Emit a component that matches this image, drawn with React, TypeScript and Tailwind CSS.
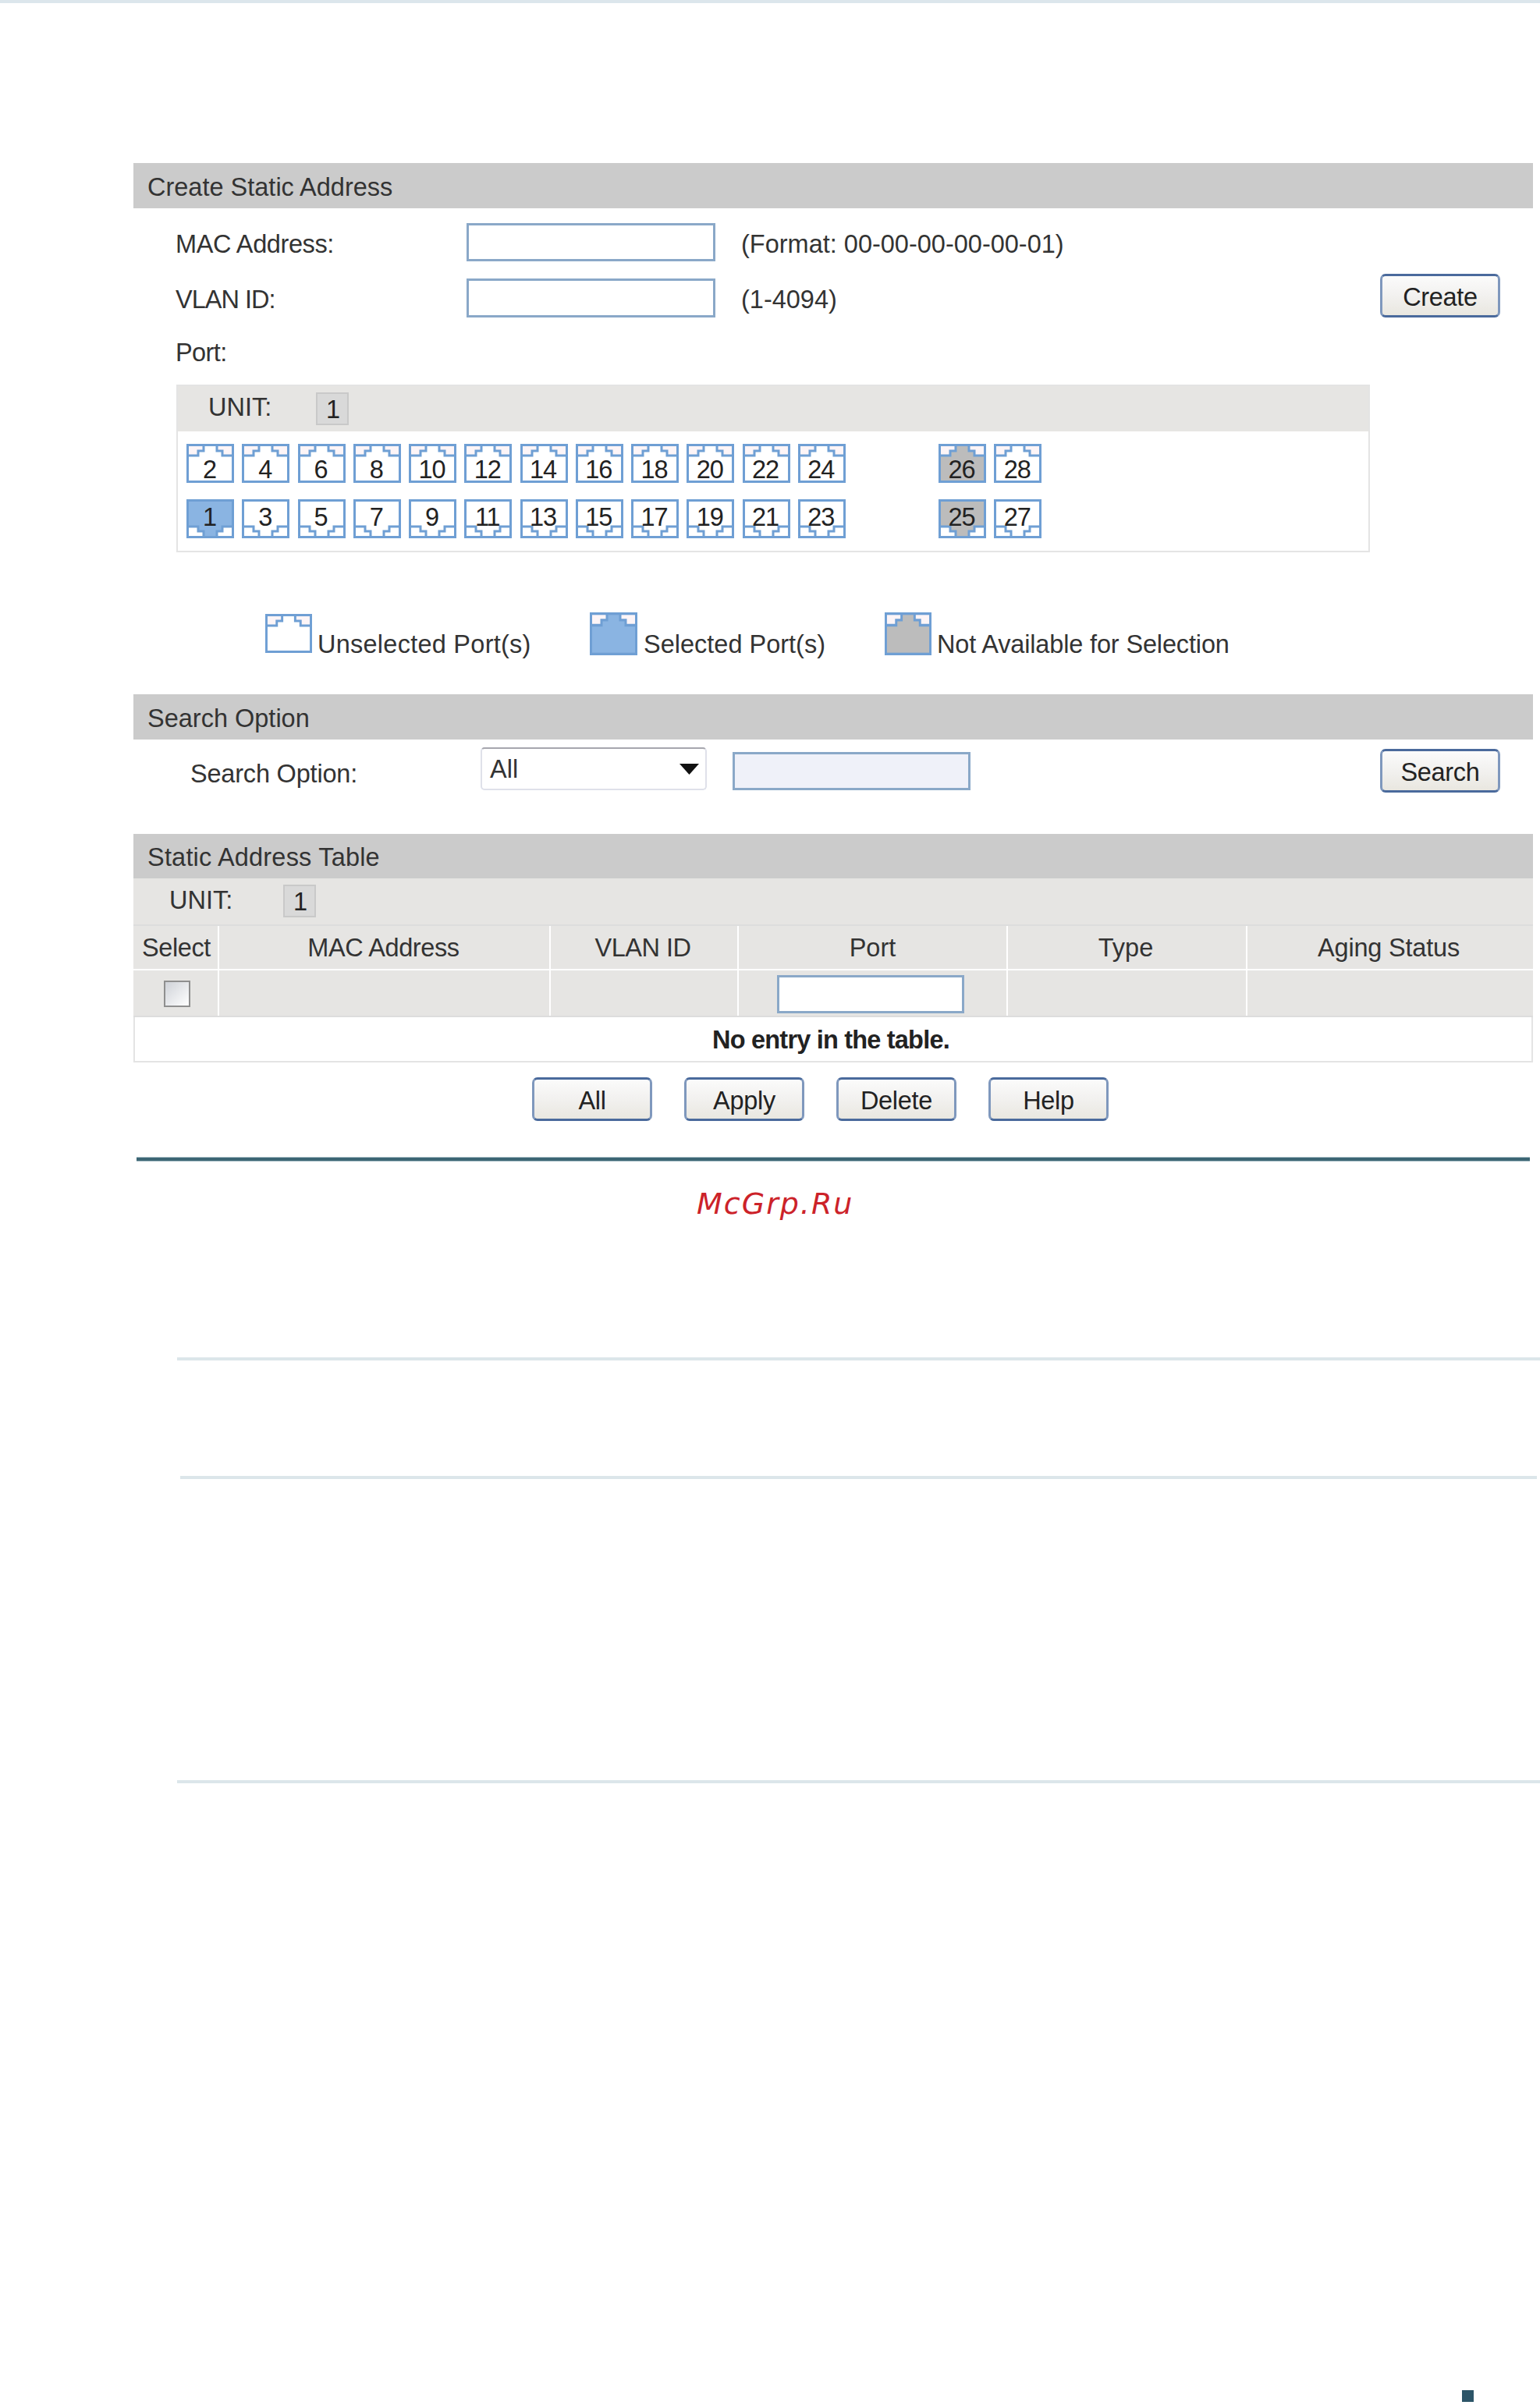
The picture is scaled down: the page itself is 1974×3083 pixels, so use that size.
/**
 * Static address config page: create form, search bar, address table.
 * Port glyphs are drawn inline, everything else is flow layout.
 */

const EVEN_PORTS = [2, 4, 6, 8, 10, 12, 14, 16, 18, 20, 22, 24];
const ODD_PORTS = [1, 3, 5, 7, 9, 11, 13, 15, 17, 19, 21, 23];

function PortGlyph({
  fill = "#ffffff",
  flip = false,
  corner = "#fdf5f7",
  className,
}: {
  fill?: string;
  flip?: boolean;
  corner?: string;
  className?: string;
}) {
  return (
    <svg viewBox="0 0 61 50" preserveAspectRatio="none" className={className}>
      <g transform={flip ? "matrix(1 0 0 -1 0 50)" : undefined}>
        <rect x="1" y="1" width="59" height="48" fill={fill} />
        <path d="M2 15H15V9H22V2H2Z" fill={corner} />
        <path d="M59 15H46V9H39V2H59Z" fill={corner} />
        <path
          d="M2 15H15V9H22V2M59 15H46V9H39V2"
          fill="none"
          stroke="#6f9fd4"
          strokeWidth="3"
        />
        <rect x="1.5" y="1.5" width="58" height="47" fill="none" stroke="#6f9fd4" strokeWidth="3" />
      </g>
    </svg>
  );
}

function Port({ n, flip, fill, corner }: { n: number; flip?: boolean; fill?: string; corner?: string }) {
  return (
    <div className="relative h-[50px] w-[61px] shrink-0">
      <PortGlyph flip={flip} fill={fill} corner={corner} className="h-full w-full" />
      <span
        className={`absolute inset-0 flex items-center justify-center pr-[2px] text-[32.5px] leading-none tracking-[-1px] text-[#222] ${
          flip ? "pb-[3px]" : "pt-[17px]"
        }`}
      >
        {n}
      </span>
    </div>
  );
}

function PortRow({ ports, flip, extra, className }: { ports: number[]; flip?: boolean; extra: number[]; className?: string }) {
  return (
    <div className={`flex ${className ?? ""}`}>
      <div className="flex w-[964px] gap-[10.25px]">
        {ports.map((p) => (
          <Port key={p} n={p} flip={flip} fill={p === 1 ? "#8ab4e2" : undefined} corner={flip ? "#ffffff" : undefined} />
        ))}
      </div>
      <div className="flex gap-[10.25px]">
        <Port n={extra[0]} flip={flip} fill="#bcbcbc" corner={flip ? "#ffffff" : undefined} />
        <Port n={extra[1]} flip={flip} corner={flip ? "#ffffff" : undefined} />
      </div>
    </div>
  );
}

function Btn({ children, className }: { children: React.ReactNode; className?: string }) {
  return (
    <button
      className={`flex h-[56px] w-[154px] items-center justify-center rounded-[7px] border-[3px] border-x-[#7f98bd] border-y-[#4a6a9c] bg-gradient-to-b from-[#fbfbfb] via-[#f2f1ef] to-[#e9e7e0] pt-[5px] text-[32.5px] leading-none tracking-[-0.3px] text-[#222] ${className ?? ""}`}
    >
      {children}
    </button>
  );
}

function SectionHead({ children }: { children: React.ReactNode }) {
  return (
    <div className="flex h-[58px] items-center bg-[#cbcbcb] pl-[18px] pt-[3px] text-[#333]">{children}</div>
  );
}

function UnitBox() {
  return (
    <div className="flex h-[42px] w-[42px] items-center justify-center border-2 border-[#c9c9c9] bg-[#d9d9d9] pl-[2px] pt-[2px] leading-none text-[#222]">
      1
    </div>
  );
}

function TextBox({ className }: { className?: string }) {
  return <div className={`border-[3px] border-[#8aa8c8] bg-white ${className ?? ""}`} />;
}

export default function App() {
  return (
    <div className="h-[3083px] w-[1974px] overflow-hidden bg-white font-['Liberation_Sans',Arial,sans-serif] text-[32.5px] leading-[40px] text-[#333]">
      <div className="h-[4px] bg-[#dce6ec]" />

      <main className="ml-[171px] mt-[205px] w-[1794px]">
        {/* create form */}
        <SectionHead>Create Static Address</SectionHead>
        <div className="mt-[19px] flex h-[49px] items-center pl-[54px]">
          <span className="w-[373px] pt-[4px] tracking-[-0.4px]">MAC Address:</span>
          <TextBox className="h-[49px] w-[319px]" />
          <span className="ml-[33px] pt-[4px]">(Format: 00-00-00-00-00-01)</span>
        </div>
        <div className="mt-[22px] flex h-[50px] items-center pl-[54px]">
          <span className="w-[373px] pt-[4px] tracking-[-1px]">VLAN ID:</span>
          <TextBox className="h-[50px] w-[319px]" />
          <span className="ml-[33px] pt-[4px]">(1-4094)</span>
          <Btn className="ml-auto mr-[42px] h-[55px] self-end">Create</Btn>
        </div>
        <div className="ml-[54px] mt-[25px] tracking-[-0.6px]">Port:</div>

        <div className="ml-[55px] mt-[21px] h-[215px] w-[1530px] border-2 border-[#e4e4e4]">
          <div className="flex h-[58px] items-center bg-[#e6e5e3] pl-[39px]">
            <span className="w-[138px] pb-[4px]">UNIT:</span>
            <UnitBox />
          </div>
          <PortRow ports={EVEN_PORTS} extra={[26, 28]} className="ml-[11px] mt-[16px]" />
          <PortRow ports={ODD_PORTS} flip extra={[25, 27]} className="ml-[11px] mt-[21px]" />
        </div>

        {/* legend */}
        <div className="ml-[169px] mt-[77px] flex h-[59px] items-end">
          <div className="flex w-[416px] items-end gap-[7px]">
            <PortGlyph className="mb-[7px] h-[50px] w-[60px] shrink-0" />
            <span className="leading-[36px] tracking-[0.25px]">Unselected Port(s)</span>
          </div>
          <div className="flex w-[378px] items-end gap-[8px]">
            <PortGlyph fill="#8ab4e2" className="mb-[4px] h-[55px] w-[61px] shrink-0" />
            <span className="leading-[36px]">Selected Port(s)</span>
          </div>
          <div className="flex items-end gap-[7px]">
            <PortGlyph fill="#bcbcbc" className="mb-[4px] h-[55px] w-[60px] shrink-0" />
            <span className="leading-[36px] tracking-[-0.15px]">Not Available for Selection</span>
          </div>
        </div>

        {/* search */}
        <div className="mt-[46px]">
          <SectionHead>Search Option</SectionHead>
        </div>
        <div className="flex h-[68px] items-start pt-[10px]">
          <span className="ml-[73px] mt-[14px] w-[372px] tracking-[-0.2px]">Search Option:</span>
          <div className="flex h-[55px] w-[290px] items-center justify-between rounded-[5px] border-2 border-[#dfe1ea] border-t-[#a6a6ae] pl-[10px] pr-[8px]">
            All
            <svg viewBox="0 0 25 14" className="h-[14px] w-[25px]">
              <path d="M0 0H25L12.5 14Z" fill="#111" />
            </svg>
          </div>
          <div className="ml-[33px] mt-[6px] h-[49px] w-[305px] border-[3px] border-[#8aa8c8] bg-[#eff1f9]" />
          <Btn className="ml-auto mr-[42px] mt-[2px]">Search</Btn>
        </div>

        {/* table */}
        <div className="mt-[53px]">
          <div className="flex h-[57px] items-center bg-[#cbcbcb] pl-[18px] pt-[2px] tracking-[0.2px]">Static Address Table</div>
          <div className="bg-[#e6e5e3]">
            <div className="flex h-[61px] border-b-2 border-[#dddddd] pl-[46px] pt-[8px]">
              <span className="w-[146px]">UNIT:</span>
              <UnitBox />
            </div>
            <div className="grid grid-cols-[110px_425px_241px_345px_307px_366px] border-b-2 border-white text-center">
              <div className="h-[55px] border-r-2 border-white pl-[2px] leading-[56px] tracking-[-0.4px]">Select</div>
              <div className="h-[55px] border-r-2 border-white pr-[2px] leading-[56px] tracking-[-0.4px]">MAC Address</div>
              <div className="h-[55px] border-r-2 border-white pr-[3px] leading-[56px] tracking-[-0.5px]">VLAN ID</div>
              <div className="h-[55px] border-r-2 border-white leading-[56px]">Port</div>
              <div className="h-[55px] border-r-2 border-white pr-[3px] leading-[56px]">Type</div>
              <div className="h-[55px] pr-[4px] leading-[56px] tracking-[-0.2px]">Aging Status</div>
            </div>
            <div className="grid h-[60px] grid-cols-[110px_425px_241px_345px_307px_366px] border-b-2 border-[#dddddd]">
              <div className="flex items-center justify-center border-r-2 border-white pl-[3px] pt-[2px]">
                <div className="h-[34px] w-[34px] border-2 border-[#8f8f8f] bg-gradient-to-br from-[#cfd2d8] to-white" />
              </div>
              <div className="border-r-2 border-white" />
              <div className="border-r-2 border-white" />
              <div className="flex items-center justify-center border-r-2 border-white pr-[6px] pt-[2px]">
                <TextBox className="h-[49px] w-[240px]" />
              </div>
              <div className="border-r-2 border-white" />
              <div />
            </div>
          </div>
          <div className="flex h-[58px] items-center justify-center border-2 border-t-0 border-[#e4e4e4] pr-[6px] pt-[1px] font-bold tracking-[-0.8px] text-[#222]">
            No entry in the table.
          </div>
        </div>

        <div className="ml-[511px] mt-[19px] flex gap-[41px]">
          <Btn>All</Btn>
          <Btn>Apply</Btn>
          <Btn>Delete</Btn>
          <Btn>Help</Btn>
        </div>

        <div className="ml-[4px] mt-[46px] h-[6px] w-[1786px] border-y border-[#a9bfc6] bg-[#3c6674]" />

        <div className="ml-[722px] mt-[30px] font-['DejaVu_Sans',sans-serif] text-[38px] italic leading-[48px] tracking-[2px] text-[#cc2229]">
          McGrp.Ru
        </div>
      </main>

      {/* empty ruled rows further down the page */}
      <div className="ml-[227px] mt-[173px] h-[4px] w-[1747px] bg-[#dce6ea]" />
      <div className="ml-[231px] mt-[148px] h-[4px] w-[1739px] bg-[#dce6ea]" />
      <div className="ml-[227px] mt-[386px] h-[4px] w-[1747px] bg-[#dce6ea]" />

      <div className="ml-[1874px] mt-[778px] h-[15px] w-[15px] bg-[#2d5568]" />
    </div>
  );
}
